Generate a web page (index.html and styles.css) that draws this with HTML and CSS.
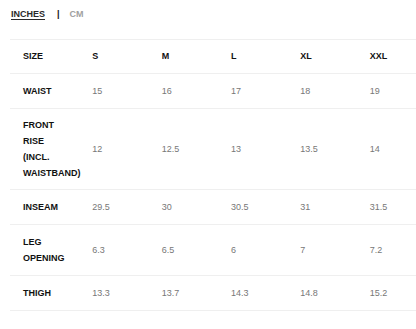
FILE: index.html
```html
<!DOCTYPE html>
<html>
<head>
<meta charset="utf-8">
<link rel="stylesheet" href="styles.css">
</head>
<body>
<div class="units">
  <span class="unit active">INCHES</span>
  <span class="sep">|</span>
  <span class="unit">CM</span>
</div>
<div class="wrap">
<table class="chart">
  <tr class="head"><th>SIZE</th><th>S</th><th>M</th><th>L</th><th>XL</th><th>XXL</th></tr>
  <tr><th>WAIST</th><td>15</td><td>16</td><td>17</td><td>18</td><td>19</td></tr>
  <tr class="tall"><th>FRONT<br>RISE<br>(INCL.<br>WAISTBAND)</th><td>12</td><td>12.5</td><td>13</td><td>13.5</td><td>14</td></tr>
  <tr><th>INSEAM</th><td>29.5</td><td>30</td><td>30.5</td><td>31</td><td>31.5</td></tr>
  <tr><th>LEG<br>OPENING</th><td>6.3</td><td>6.5</td><td>6</td><td>7</td><td>7.2</td></tr>
  <tr><th>THIGH</th><td>13.3</td><td>13.7</td><td>14.3</td><td>14.8</td><td>15.2</td></tr>
</table>
</div>
</body>
</html>
```
FILE: styles.css
```css
html, body {
  margin: 0;
  padding: 0;
  background: #fff;
  overflow: hidden;
}
body {
  font-family: "Liberation Sans", Arial, sans-serif;
  font-size: 9px;
}
.units {
  display: flex;
  align-items: center;
  padding: 8px 0 0 11px;
  height: 13px;
  line-height: 11px;
}
.unit {
  font-weight: bold;
  color: #a0a0a0;
}
.unit.active {
  color: #2a2a2a;
  text-decoration: underline;
  text-decoration-thickness: 1px;
  text-underline-offset: 2px;
}
.sep {
  font-weight: bold;
  color: #111;
  margin: 0 10px 0 12px;
}
.wrap {
  margin: 18px 0 0 10px;
  width: 416px;
}
.chart {
  border-collapse: collapse;
  width: 416px;
  table-layout: fixed;
}
.chart tr {
  border-top: 1px solid #efefef;
  border-bottom: 1px solid #efefef;
}
.chart th, .chart td {
  text-align: left;
  padding: 9px 0 9px 13px;
  line-height: 16px;
  vertical-align: middle;
}
.chart .head th {
  padding-top: 8px;
}
.chart .tall th,
.chart .tall td {
  padding-top: 8px;
  padding-bottom: 8px;
}
.chart th {
  font-weight: bold;
  color: #111;
}
.chart td {
  color: #777;
}
```
